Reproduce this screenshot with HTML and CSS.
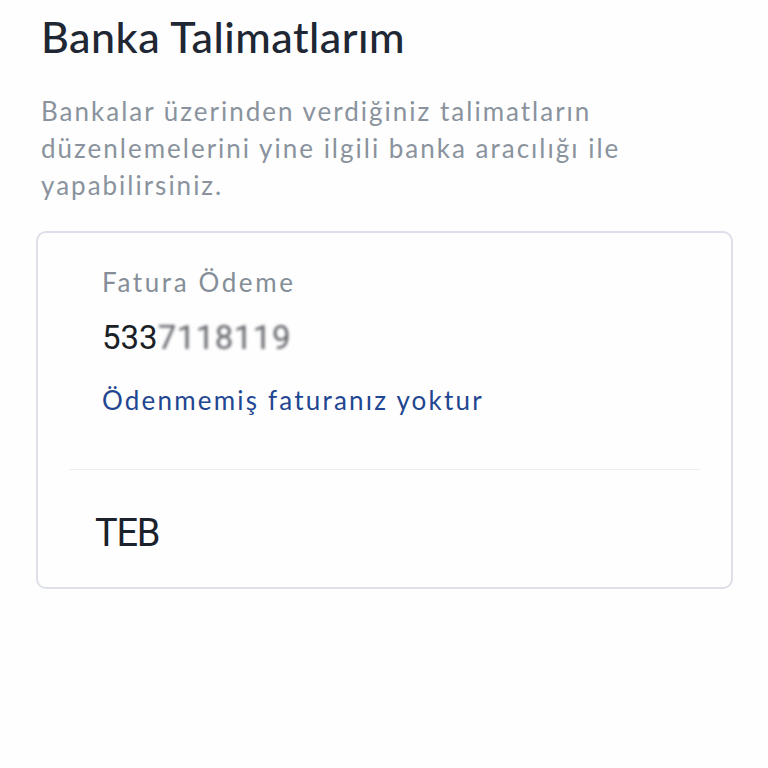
FILE: index.html
```html
<!DOCTYPE html>
<html lang="tr">
  <head>
    <meta charset="UTF-8" />
    <meta name="viewport" content="width=device-width, initial-scale=1" />
    <title>Banka Talimatlarım</title>
    <link rel="stylesheet" href="styles.css">
  </head>
  <body>
    <div class="page">
      <h1>Banka Talimatlarım</h1>
      <p class="intro">
        Bankalar üzerinden verdiğiniz talimatların düzenlemelerini yine ilgili banka aracılığı ile yapabilirsiniz.
      </p>
      <div class="card">
        <div class="card-top">
          <div class="label">Fatura Ödeme</div>
          <div class="number">533<span class="masked">7118119</span></div>
          <div class="status">Ödenmemiş faturanız yoktur</div>
        </div>
        <div class="divider"></div>
        <div class="bank">TEB</div>
      </div>
    </div>
  </body>
</html>
```

FILE: styles.css
```css
body {
  margin: 0;
  background: #fefefe;
  font-family: Lato, "Noto Sans", sans-serif;
  color: #1e2733;
}
.page {
  padding: 11px 35px 0 36px;
}
h1 {
  margin: 0 0 0 5px;
  font-size: 43px;
  font-weight: 500;
  line-height: 52px;
  letter-spacing: 0.5px;
  color: #1e2733;
}
.intro {
  margin: 30px 0 0 5px;
  font-size: 26px;
  line-height: 37px;
  letter-spacing: 2px;
  color: #8a939d;
  max-width: 640px;
}
.card {
  margin-top: 27px;
  border: 2px solid #dde0e9;
  border-radius: 10px;
  padding: 0 31px 31px 31px;
}
.card-top {
  padding: 33px 0 52px 33px;
}
.label {
  font-size: 26px;
  line-height: 32px;
  letter-spacing: 2.6px;
  color: #858e98;
}
.number {
  margin-top: 21px;
  font-family: Roboto, sans-serif;
  font-size: 33px;
  line-height: 38px;
  color: #1b1f27;
}
.masked {
  filter: blur(1.4px);
  opacity: 0.7;
  letter-spacing: 0.5px;
}
.status {
  margin-top: 26px;
  font-size: 26px;
  line-height: 34px;
  letter-spacing: 2.2px;
  color: #1f4690;
}
.divider {
  height: 1px;
  background: #eceef2;
}
.bank {
  margin: 40px 0 0 26px;
  font-family: Roboto, sans-serif;
  font-size: 38px;
  line-height: 46px;
  letter-spacing: -1.2px;
  color: #1b222c;
}
```
